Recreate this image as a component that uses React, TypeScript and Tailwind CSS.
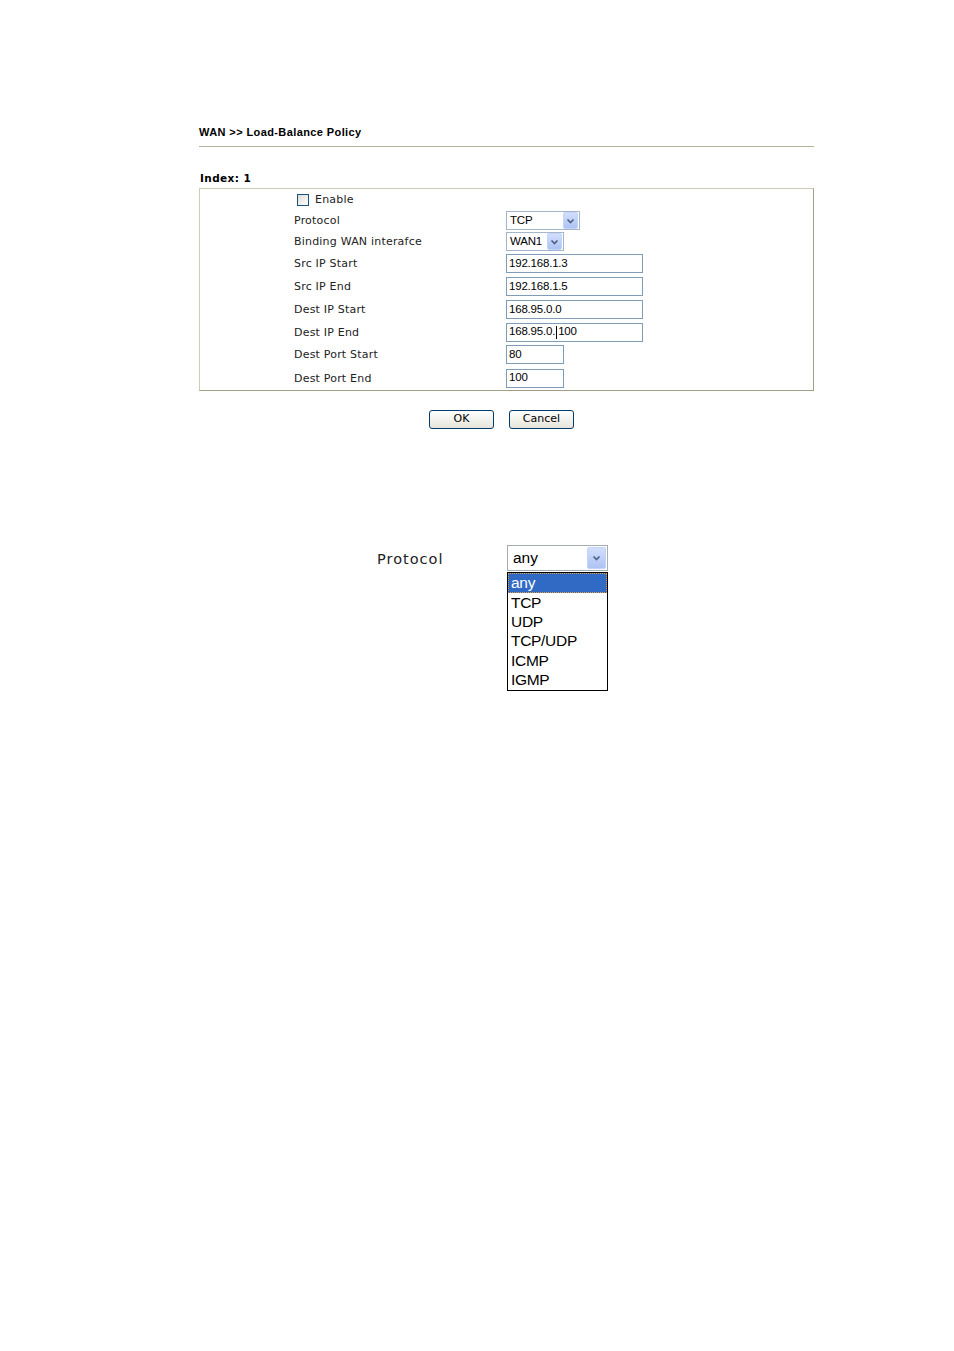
import React from "react";

const label = "pt-[2px] font-['DejaVu_Sans',sans-serif] text-[11px] text-[#222] tracking-[0.2px]";
const field = "font-['Liberation_Sans',Arial,sans-serif] text-[11.5px] text-black tracking-[-0.2px]";

function Arrow({ w = 15, h = 17 }: { w?: number; h?: number }) {
  return (
    <span
      className="flex items-center justify-center rounded-[2px] border border-[#c3d3fd] bg-gradient-to-b from-[#d2defc] to-[#aec3f3]"
      style={{ width: w, height: h }}
    >
      <svg width="9" height="6" viewBox="0 0 9 6">
        <polyline points="1.5,1.5 4.5,4.5 7.5,1.5" fill="none" stroke="#4d6185" strokeWidth="1.7" />
      </svg>
    </span>
  );
}

function Select({ value, width }: { value: string; width: number }) {
  return (
    <div
      className={`flex h-[19px] items-center justify-between border border-[#a5b6cb] bg-white pl-[3px] pr-px ${field}`}
      style={{ width }}
    >
      <span>{value}</span>
      <Arrow />
    </div>
  );
}

function Input({ value, width, caret }: { value: string; width: number; caret?: number }) {
  return (
    <div
      className={`flex h-[19px] items-center border border-[#7f9db9] bg-white pl-[2px] ${field}`}
      style={{ width }}
    >
      {caret !== undefined ? (
        <>
          <span>{value.slice(0, caret)}</span>
          <span className="mx-px h-[13px] w-px bg-black" />
          <span>{value.slice(caret)}</span>
        </>
      ) : (
        <span>{value}</span>
      )}
    </div>
  );
}

const rows: { name: string; h: number; el: React.ReactNode }[] = [
  { name: "Protocol", h: 21, el: <Select value="TCP" width={74} /> },
  { name: "Binding WAN interafce", h: 21, el: <Select value="WAN1" width={58} /> },
  { name: "Src IP Start", h: 23, el: <Input value="192.168.1.3" width={137} /> },
  { name: "Src IP End", h: 23, el: <Input value="192.168.1.5" width={137} /> },
  { name: "Dest IP Start", h: 23, el: <Input value="168.95.0.0" width={137} /> },
  { name: "Dest IP End", h: 22, el: <Input value="168.95.0.100" width={137} caret={9} /> },
  { name: "Dest Port Start", h: 23, el: <Input value="80" width={58} /> },
  { name: "Dest Port End", h: 24, el: <Input value="100" width={58} /> },
];

function Button({ children }: { children: React.ReactNode }) {
  return (
    <button className="flex h-[19px] w-[65px] items-center justify-center rounded-[3px] border border-[#003c74] bg-gradient-to-b from-white to-[#e6e4da] font-['DejaVu_Sans',sans-serif] text-[11px] text-black">
      {children}
    </button>
  );
}

const options = [
  { t: "any", h: 20 },
  { t: "TCP", h: 19 },
  { t: "UDP", h: 19 },
  { t: "TCP/UDP", h: 20 },
  { t: "ICMP", h: 19 },
  { t: "IGMP", h: 20 },
];

export default function App() {
  return (
    <div className="min-h-[1351px] w-full bg-white">
      <div className="ml-[199px] w-[615px] pt-[125px]">
        <div className="h-[14px] font-['Liberation_Sans',Arial,sans-serif] text-[11px] font-bold leading-[14px] tracking-[0.4px] text-black">
          WAN &gt;&gt; Load-Balance Policy
        </div>
        <div className="mt-[7px] h-px bg-[#b6b29c]" />
        <div className="mt-[24px] h-[14px] pl-px font-['DejaVu_Sans',sans-serif] text-[10.5px] font-bold leading-[14px] tracking-[0.4px] text-black">
          Index: 1
        </div>
        <div className="mt-[3px] border border-[#cfcbb8] border-b-[#a19d86] border-r-[#a19d86] pl-[94px]">
          <div className="flex h-[21px] items-center">
            <span className="ml-[3px] mt-px h-[12px] w-[12px] border border-[#1c5180] bg-gradient-to-br from-[#dcdcd6] to-white" />
            <span className={`ml-[6px] ${label}`}>Enable</span>
          </div>
          {rows.map((r) => (
            <div key={r.name} className="flex items-center" style={{ height: r.h }}>
              <span className={`w-[212px] ${label}`}>{r.name}</span>
              {r.el}
            </div>
          ))}
        </div>
        <div className="mt-[19px] flex gap-[15px] pl-[230px]">
          <Button>OK</Button>
          <Button>Cancel</Button>
        </div>
      </div>

      <div className="mt-[116px] flex pl-[377px]">
        <span className="h-[26px] w-[130px] pt-px font-['DejaVu_Sans',sans-serif] text-[14.5px] leading-[26px] tracking-[1px] text-[#222]">
          Protocol
        </span>
        <div className="w-[101px]">
          <div className="flex h-[26px] items-center justify-between border border-[#a5acb2] bg-white pl-[5px] pr-px font-['Liberation_Sans',Arial,sans-serif] text-[15.5px] text-black">
            <span>any</span>
            <Arrow w={19} h={22} />
          </div>
          <div className="mt-px border border-black bg-white font-['Liberation_Sans',Arial,sans-serif] text-[15.5px] tracking-[-0.3px]">
            {options.map((o, i) => (
              <div
                key={o.t}
                className={
                  i === 0
                    ? "flex items-center border border-dotted border-[#e2a03d] bg-[#316ac5] pl-[2px] text-white"
                    : "flex items-center pl-[3px] text-black"
                }
                style={{ height: o.h }}
              >
                {o.t}
              </div>
            ))}
          </div>
        </div>
      </div>
    </div>
  );
}
